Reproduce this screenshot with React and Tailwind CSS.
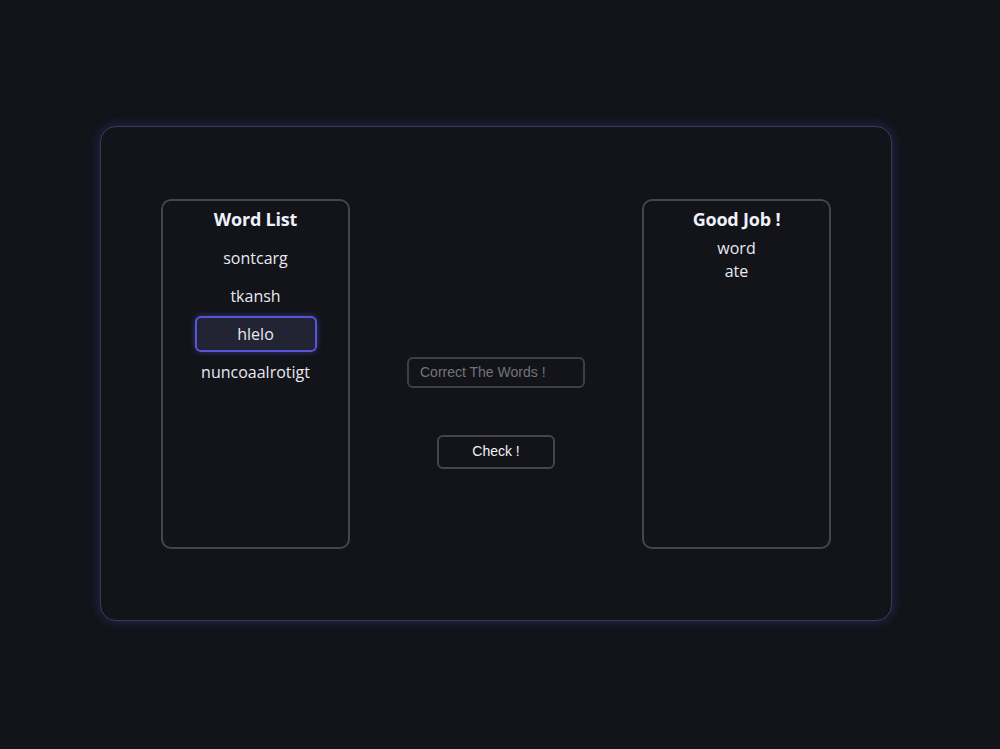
import React, { useState } from 'react';

const words = ['sontcarg', 'tkansh', 'hlelo', 'nuncoaalrotigt'];
const solved = ['word', 'ate'];

const App = () => {
  const [selected, setSelected] = useState(2);
  const [guess, setGuess] = useState('');

  return (
    <div className="min-h-[749px] w-full bg-[#13131a] flex items-center justify-center pr-[8px] pb-[2px] font-['Open_Sans',sans-serif]">
      {/* Game card */}
      <div className="w-[792px] h-[495px] rounded-2xl border border-[#3b3a55] bg-[#13131a] shadow-[0_0_12px_rgba(88,80,200,0.35)] flex items-center justify-between px-[60px]">
        {/* Word list */}
        <div className="w-[189px] h-[350px] rounded-[10px] border-2 border-[#45454e] flex flex-col items-center pt-[5px]">
          <h2 className="text-[18px] font-bold text-[#eef0fa] leading-[27px] tracking-[-0.2px]">Word List</h2>
          <div className="mt-[7px] flex flex-col items-center gap-[2px]">
            {words.map((w, i) => (
              <button
                key={w}
                onClick={() => setSelected(i)}
                className={`w-[122px] h-[36px] rounded-md text-[16px] text-[#e8e9f2] border-2 ${
                  selected === i
                    ? 'bg-[#232433] border-[#5556d9] shadow-[0_0_6px_rgba(90,90,230,0.45)]'
                    : 'border-transparent'
                }`}
              >
                {w}
              </button>
            ))}
          </div>
        </div>

        {/* Middle controls */}
        <div className="flex flex-col items-center pt-[78px]">
          <input
            value={guess}
            onChange={(e) => setGuess(e.target.value)}
            placeholder="Correct The Words !"
            className="w-[178px] h-[31px] rounded-md border-2 border-[#3f3f47] bg-transparent px-[11px] text-[14px] text-[#e8e9f2] placeholder:text-[#74747c] outline-none font-['Liberation_Sans',sans-serif]"
          />
          <button className="mt-[47px] w-[118px] h-[34px] rounded-md border-2 border-[#45454e] text-[14px] text-[#f2f2f7] font-['Liberation_Sans',sans-serif]">
            Check !
          </button>
        </div>

        {/* Solved list */}
        <div className="w-[189px] h-[350px] rounded-[10px] border-2 border-[#45454e] flex flex-col items-center pt-[5px]">
          <h2 className="text-[18px] font-bold text-[#eef0fa] leading-[27px] tracking-[-0.2px]">Good Job !</h2>
          <div className="mt-[4px] flex flex-col items-center">
            {solved.map((w) => (
              <span key={w} className="text-[16px] leading-[23px] text-[#e8e9f2]">{w}</span>
            ))}
          </div>
        </div>
      </div>
    </div>
  );
};

export default App;
